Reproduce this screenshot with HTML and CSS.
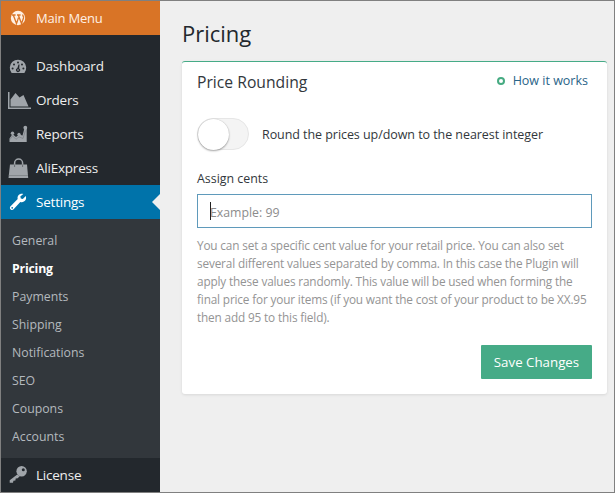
FILE: index.html
```html
<!DOCTYPE html>
<html lang="en">
<head>
	<meta charset="utf-8">
	<title>Pricing</title>
	<link rel="stylesheet" href="styles.css">
</head>
<body>
<div class="app">
	<nav class="sidebar">
		<a class="menu-item main-menu">
			<svg class="icon" viewBox="0 0 24 18">
				<circle cx="12" cy="9" r="7.200" fill="#fff0e4"/>
				<path d="M6 6h3.600M11 6h3.600M7.300 6l3.200 8.600 2-6M12.300 6l3.200 8.600 2-5.600c.4-1.400-.8-2-.8-3.400" fill="none" stroke="#d97426" stroke-width="1.300"/>
			</svg>
			<span>Main Menu</span>
		</a>
		<div class="menu">
			<a class="menu-item">
				<svg class="icon" viewBox="0 0 24 18">
					<path d="M5.600 16A8.200 8.200 0 1 1 18.400 16z" fill="#a0a5aa"/>
					<g fill="#23282d">
						<circle cx="6.600" cy="11.500" r="1"/>
						<circle cx="8" cy="7.500" r="1"/>
						<circle cx="12" cy="5.500" r="1"/>
						<circle cx="16" cy="7.500" r="1"/>
						<circle cx="17.400" cy="11.500" r="1"/>
						<path d="M12.500 7.500h1l-.3 4a2 2 0 1 1-1.900-.2z"/>
					</g>
					<circle cx="12" cy="13" r=".8" fill="#a0a5aa"/>
				</svg>
				<span>Dashboard</span>
			</a>
			<a class="menu-item">
				<svg class="icon" viewBox="0 0 24 18">
					<path d="M2 1h1.500v15.500H25V18H2z" fill="#a0a5aa"/>
					<path d="M4.500 15.500V8.500L9.500 2l4 4.500L17.500 4l5 11.500z" fill="#a0a5aa"/>
				</svg>
				<span>Orders</span>
			</a>
			<a class="menu-item">
				<svg class="icon" viewBox="0 0 24 18">
					<path d="M3.500 17v-3.500l3-4.500 3.500 3 3-2.500 3.500 1 2-7.500h2.200V17z" fill="#a0a5aa"/>
					<g fill="#a0a5aa">
						<circle cx="6.500" cy="8.300" r="1.700"/>
						<circle cx="13" cy="9.300" r="1.600"/>
						<circle cx="19.300" cy="2.700" r="1.900"/>
					</g>
					<path d="M4 14.500l2.500-3.700 3.500 3.500 3-2.500 4 1.700 2.400-8" fill="none" stroke="#6c7176" stroke-width=".5"/>
				</svg>
				<span>Reports</span>
			</a>
			<a class="menu-item">
				<svg class="icon bag" viewBox="0 0 24 22">
					<path d="M8.600 10V6a4 4 0 0 1 8 0v4" fill="none" stroke="#a0a5aa" stroke-width="1.500"/>
					<path d="M4 7.500h17l1.200 13.500H2.500z" fill="#a0a5aa"/>
					<path d="M8.600 7.500v2.500M16.600 7.500v2.500" stroke="#666b70"/>
					<path d="M2.800 18.500h19.200" stroke="#777c81" stroke-width=".7"/>
				</svg>
				<span>AliExpress</span>
			</a>
			<a class="menu-item current">
				<svg class="icon" viewBox="0 0 24 18">
					<path d="M19.800 3.100l-3 2.800-2-.4-.5-2 3-2.600c-3-1-6.500 1.200-5.600 5.200L4.600 13.300c-2 2 .8 5.200 3 3l6.700-7.300c4 1 6.700-2 5.500-5.900z" fill="#fff"/>
					<circle cx="6.200" cy="14.800" r=".9" fill="#0073aa"/>
				</svg>
				<span>Settings</span>
			</a>
		</div>
		<div class="submenu">
			<a>General</a>
			<a class="active">Pricing</a>
			<a>Payments</a>
			<a>Shipping</a>
			<a>Notifications</a>
			<a>SEO</a>
			<a>Coupons</a>
			<a>Accounts</a>
		</div>
		<a class="menu-item">
			<svg class="icon" viewBox="0 0 24 18">
				<path d="M11.300 8.500L3.700 14.200v2.600h3.300l.4-2 2-.3.300-2 2-.3 2-2z" fill="#a0a5aa"/>
				<circle cx="15.600" cy="5.300" r="5.200" fill="#a0a5aa"/>
				<circle cx="17.300" cy="3.700" r="1.500" fill="#23282d"/>
			</svg>
			<span>License</span>
		</a>
	</nav>

	<main class="content">
		<h1>Pricing</h1>
		<section class="card">
			<div class="card-head">
				<h2>Price Rounding</h2>
				<a class="how"><i class="ring"></i><span>How it works</span></a>
			</div>
			<div class="toggle-row">
				<span class="toggle"><i class="knob"></i></span>
				<span class="toggle-label">Round the prices up/down to the nearest integer</span>
			</div>
			<label class="field-label" for="cents">Assign cents</label>
			<div class="field">
				<input type="text" id="cents" placeholder="Example: 99">
				<i class="caret"></i>
			</div>
			<p class="help">
				You can set a specific cent value for your retail price. You can also set<br>
				several different values separated by comma. In this case the Plugin will<br>
				apply these values randomly. This value will be used when forming the<br>
				final price for your items (if you want the cost of your product to be XX.95<br>
				then add 95 to this field).
			</p>
			<div class="actions">
				<button type="button" class="save">Save Changes</button>
			</div>
		</section>
	</main>
</div>
</body>
</html>
```
FILE: styles.css
```css
* {
	box-sizing: border-box;
}

body {
	margin: 0;
	font-family: "Open Sans", "Noto Sans", sans-serif;
	font-size: 13px;
	color: #32373c;
}

.app {
	display: flex;
	width: 615px;
	height: 493px;
	border: 1px solid #808080;
	background: #efefef;
	overflow: hidden;
}

.sidebar {
	flex: none;
	width: 159px;
	background: #23282d;
}

.menu {
	padding-top: 14px;
}

.menu-item {
	position: relative;
	display: flex;
	align-items: center;
	gap: 6px;
	height: 34px;
	padding-left: 5px;
	color: #eee;
	font-size: 13.5px;
	letter-spacing: -.22px;
}

.icon {
	flex: none;
	width: 24px;
	height: 18px;
	overflow: visible;
}

.icon.bag {
	height: 22px;
}

.main-menu {
	background: #d97426;
	color: #fff0e4;
	font-size: 13px;
}

.current {
	background: #0073aa;
	color: #fff;
}

.current::after {
	content: "";
	position: absolute;
	right: 0;
	top: 9px;
	border: 8px solid transparent;
	border-left: 0;
	border-right-color: #efefef;
}

.submenu {
	height: 239px;
	padding: 8px 0 0 11px;
	background: #32373c;
}

.submenu a {
	display: block;
	height: 28px;
	line-height: 28px;
	font-size: 12.3px;
	color: #b4b9be;
}

.submenu .active {
	color: #fff;
	font-weight: 700;
	letter-spacing: -.2px;
}

.content {
	flex: 1;
	min-width: 0;
	padding: 16px 7px 0 22px;
}

h1 {
	margin: 0;
	height: 44px;
	line-height: 33px;
	font-size: 22px;
	font-weight: 400;
	color: #23282d;
}

.card {
	height: 333px;
	padding: 0 15px;
	border-top: 1px solid #46ab87;
	border-radius: 3px;
	background: #fff;
	box-shadow: 0 1px 3px rgba(0, 0, 0, .1);
}

.card-head {
	display: flex;
	justify-content: space-between;
	height: 56px;
	line-height: 40px;
}

h2 {
	margin: 0;
	font-size: 15.7px;
	font-weight: 400;
	color: #32373c;
}

.how {
	display: flex;
	height: 38px;
	align-items: center;
	gap: 8px;
	padding-right: 4px;
	font-size: 12.5px;
	color: #2a6488;
}

.ring {
	width: 8px;
	height: 8px;
	border: 2px solid #46ab82;
	border-radius: 50%;
}

.toggle-row {
	display: flex;
	align-items: center;
	gap: 13px;
	height: 32px;
}

.toggle {
	width: 52px;
	height: 32px;
	border: 1px solid #e6e6e6;
	border-radius: 16px;
	background: #f4f4f4;
}

.knob {
	display: block;
	width: 31px;
	height: 31px;
	border-radius: 50%;
	background: #fff;
	box-shadow: 0 1px 2px rgba(0, 0, 0, .35), 0 0 1px rgba(0, 0, 0, .2);
}

.toggle-label {
	font-size: 12.5px;
	letter-spacing: -.06px;
	white-space: nowrap;
}

.field-label {
	display: block;
	height: 44px;
	padding-top: 19px;
	line-height: 20px;
	font-size: 12.4px;
}

.field {
	position: relative;
	height: 34px;
}

.field input {
	display: block;
	width: 100%;
	height: 34px;
	padding: 2px 12px 0;
	border: 1px solid #5f9abb;
	background: #fff;
	font: 12.3px "Open Sans", "Noto Sans", sans-serif;
	outline: none;
}

.field input::placeholder {
	color: #8c8c8c;
	opacity: 1;
}

.caret {
	position: absolute;
	left: 13px;
	top: 8px;
	width: 1px;
	height: 18px;
	background: #222;
}

.help {
	margin: 8px 0 0;
	line-height: 18px;
	font-size: 11.8px;
	letter-spacing: -.16px;
	color: #949494;
	white-space: nowrap;
}

.actions {
	display: flex;
	justify-content: flex-end;
	padding-top: 19px;
}

.save {
	width: 111px;
	height: 34px;
	padding: 0;
	border: 0;
	border-radius: 1px;
	background: #46ab87;
	color: #fff;
	font: 13.3px "Open Sans", "Noto Sans", sans-serif;
}
```
